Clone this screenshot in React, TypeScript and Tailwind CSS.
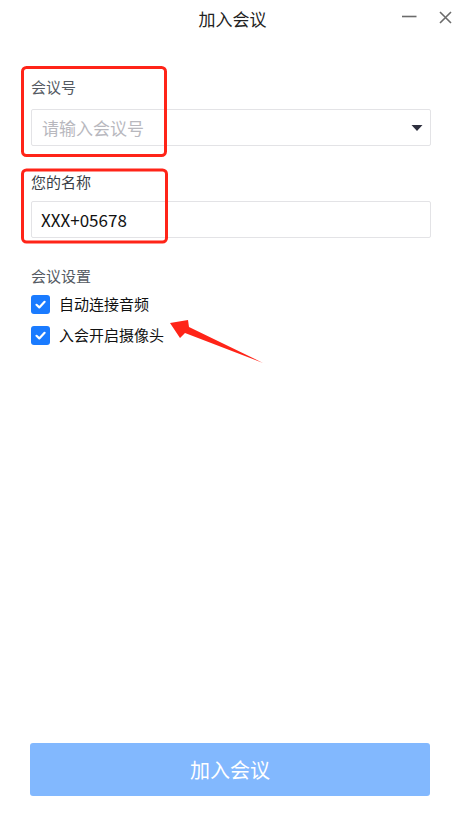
import { useState } from "react";

const font = { fontFamily: '"Noto Sans CJK SC", "Noto Sans", sans-serif' };

function Check({ checked, onClick }: { checked: boolean; onClick: () => void }) {
  return (
    <button
      onClick={onClick}
      className={`w-[19px] h-[19px] rounded-[3px] flex items-center justify-center ${
        checked ? "bg-[#1a7bff]" : "border border-[#ccc] bg-white"
      }`}
    >
      {checked && (
        <svg width="13" height="13" viewBox="0 0 13 13">
          <path d="M2.5 6.8 L5.3 9.4 L10.6 3.8" fill="none" stroke="#fff" strokeWidth="2.2" strokeLinecap="round" strokeLinejoin="round" />
        </svg>
      )}
    </button>
  );
}

export default function App() {
  const [audio, setAudio] = useState(true);
  const [camera, setCamera] = useState(true);
  const [name, setName] = useState("XXX+05678");

  return (
    <div className="relative w-[465px] h-[826px] bg-white flex flex-col" style={font}>
      {/* Header */}
      <div className="relative h-[38px] flex items-center justify-center">
        <span className="text-[17px] text-[#222]">加入会议</span>
        <div className="absolute right-[13px] top-[9px] flex items-center gap-[22px]">
          <svg width="16" height="16" viewBox="0 0 16 16">
            <path d="M1 7.5 H15.5" stroke="#6b6b6b" strokeWidth="1.6" />
          </svg>
          <svg width="13" height="13" viewBox="0 0 13 13">
            <path d="M1 1 L12 12 M12 1 L1 12" stroke="#6b6b6b" strokeWidth="1.6" />
          </svg>
        </div>
      </div>

      {/* Form */}
      <div className="px-[31px] pr-[34px] flex flex-col">
        <div className="mt-[39px] text-[15px] leading-5 text-[#555b63]">会议号</div>
        <div className="mt-[12px] h-[37px] border border-[#e3e3e6] rounded-[2px] flex items-center justify-between pl-[10px] pr-[7px]">
          <span className="text-[17px] text-[#b8b8be]">请输入会议号</span>
          <svg width="12" height="8" viewBox="0 0 12 8">
            <path d="M0.5 1 H11.5 L6 7 Z" fill="#2e2f3e" />
          </svg>
        </div>

        <div className="mt-[26px] text-[15px] leading-5 text-[#3a3f48]">您的名称</div>
        <input
          value={name}
          onChange={(e) => setName(e.target.value)}
          className="mt-[9px] h-[37px] border border-[#e3e3e6] rounded-[2px] px-[9px] text-[17px] text-[#111] outline-none"
          style={font}
        />

        <div className="mt-[28px] text-[15px] leading-5 text-[#555b63]">会议设置</div>
        <div className="mt-[7px] h-[22px] flex items-center gap-[9px]">
          <Check checked={audio} onClick={() => setAudio(!audio)} />
          <span className="text-[15px] text-[#111]">自动连接音频</span>
        </div>
        <div className="mt-[9px] h-[22px] flex items-center gap-[9px]">
          <Check checked={camera} onClick={() => setCamera(!camera)} />
          <span className="text-[15px] text-[#111]">入会开启摄像头</span>
        </div>
      </div>

      <div className="flex-1" />

      {/* Join button */}
      <div className="px-[30px] pr-[35px] mb-[30px]">
        <button className="w-full h-[53px] rounded-[3px] bg-[#82b8fe] text-white text-[20px]" style={font}>
          加入会议
        </button>
      </div>

      {/* Annotation overlay */}
      <svg className="absolute inset-0 pointer-events-none" width="465" height="826">
        <rect x="22.5" y="67.5" width="143" height="88" rx="4" fill="none" stroke="#ff2418" strokeWidth="3" />
        <rect x="22.5" y="170" width="144" height="72" rx="4" fill="none" stroke="#ff2418" strokeWidth="3" />
        <polygon points="170,323 188,320 189,327 263,363 185,333 180,338" fill="#ff2418" />
      </svg>
    </div>
  );
}
